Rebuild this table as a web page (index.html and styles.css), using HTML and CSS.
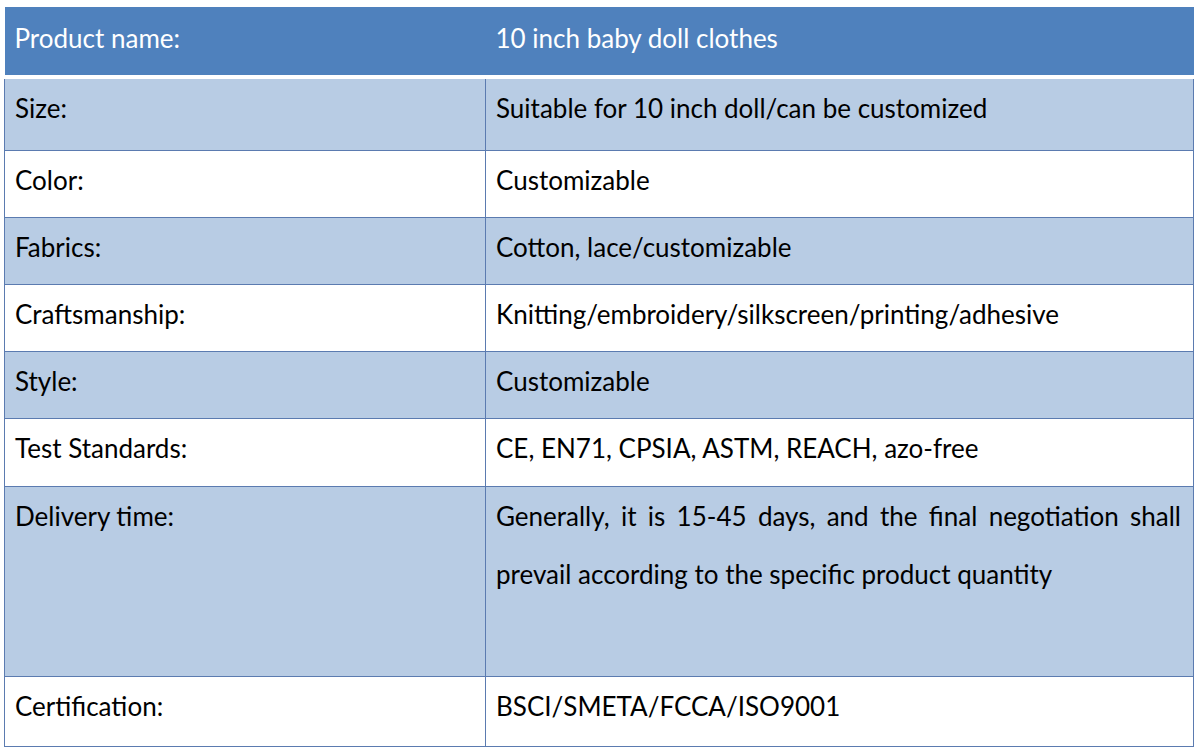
FILE: index.html
```html
<!DOCTYPE html>
<html>
<head>
<meta charset="utf-8">
<link rel="stylesheet" href="styles.css">
</head>
<body>
<table class="spec">
  <colgroup><col class="c1"><col class="c2"></colgroup>
  <thead>
    <tr class="head"><th>Product name:</th><th>10 inch baby doll clothes</th></tr>
  </thead>
  <tbody>
    <tr class="alt r1"><td>Size:</td><td>Suitable for 10 inch doll/can be customized</td></tr>
    <tr class="r2"><td>Color:</td><td>Customizable</td></tr>
    <tr class="alt r3"><td>Fabrics:</td><td>Cotton, lace/customizable</td></tr>
    <tr class="r4"><td>Craftsmanship:</td><td>Knitting/embroidery/silkscreen/printing/adhesive</td></tr>
    <tr class="alt r5"><td>Style:</td><td>Customizable</td></tr>
    <tr class="r6"><td>Test Standards:</td><td>CE, EN71, CPSIA, ASTM, REACH, azo-free</td></tr>
    <tr class="alt r7"><td>Delivery time:</td><td class="just">Generally, it is 15-45 days, and the final negotiation shall prevail according to the specific product quantity</td></tr>
    <tr class="r8"><td>Certification:</td><td>BSCI/SMETA/FCCA/ISO9001</td></tr>
  </tbody>
</table>
</body>
</html>
```
FILE: styles.css
```css
html, body {
  margin: 0;
  padding: 0;
  background: #ffffff;
}
body {
  padding: 7px 0 0 4px;
  font-family: "Lato", "Liberation Sans", sans-serif;
}
.spec {
  border-collapse: collapse;
  table-layout: fixed;
  width: 1189px;
  font-size: 26px;
  color: #000;
}
.c1 { width: 481px; }
.c2 { width: 708px; }
.spec th, .spec td {
  text-align: left;
  vertical-align: top;
  font-weight: normal;
  line-height: 58px;
  padding: 0 12px 0 10px;
  box-sizing: border-box;
}
.spec td {
  border: 1px solid #5b7bb0;
}
.head th {
  background: #4f81bd;
  color: #ffffff;
  height: 70px;
  border-bottom: 4px solid #ffffff;
  padding-top: 2px;
}
.alt td { background: #b8cce4; }
.r1 td { height: 73px; }
.r2 td { height: 67px; }
.r3 td { height: 67px; }
.r4 td { height: 67px; }
.r5 td { height: 67px; }
.r6 td { height: 68px; }
.r7 td { height: 190px; }
.r8 td { height: 70px; }
.just { text-align: justify !important; }
```
